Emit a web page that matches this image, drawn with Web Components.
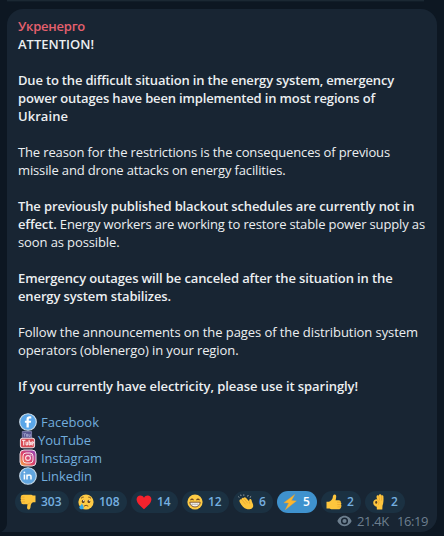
<!DOCTYPE html>
<html lang="en">
<head>
<meta charset="utf-8">
<title>Channel message</title>
<style>
html,body{margin:0;background:#0d1722;height:100%;overflow:hidden}
body{font:13px/18px "Open Sans","Noto Sans",sans-serif;color:#eceff1}
</style>
</head>
<body>
<chat-view></chat-view>
<script>
const define=(name,html,after)=>customElements.define(name,class extends HTMLElement{
  connectedCallback(){
    if(this.shadowRoot)return;
    this.attachShadow({mode:'open'}).innerHTML=typeof html==='function'?html(this):html;
    if(after)after(this);
  }
});

const hand='#fec63d',shade='#e39a2b';
const ICONS={
  down:`<path d="M.8 3.200C.8 1.500 2 .8 3.500.8h7.200c1 0 1.500.6 2.300.6h2.500v6.800h-2.300c-1.600.6-2.500 2.200-2.600 4 0 1.900-.6 3.300-1.900 3.300-1.600 0-1.900-1.700-1.500-3.300l.4-2H3.200C1.600 10.200.9 9 1.400 7.900.5 7.200.4 6 1 5.400.5 4.700.4 3.900.8 3.200z" fill="${hand}"/><path d="M1 5.400h3.600M1.400 7.900h3.500M1 3.100h3.500" stroke="${shade}" stroke-width=".6"/><path d="M7.600 10.200c1.200-.2 2-.8 2.400-1.600" fill="none" stroke="${shade}" stroke-width=".6"/>`,
  up:`<path d="M15.200 12.800c0 1.700-1.200 2.400-2.700 2.400H5.300c-1 0-1.500-.6-2.300-.6H.5V7.800h2.300c1.600-.6 3.700-2.200 3.900-4C6.800 1.900 7.300.5 8.600.5c1.600 0 1.900 1.700 1.500 3.300l-.5 2.400h3.200c1.600 0 2.300 1 1.800 2.100.9.7 1 1.800.4 2.400.5.600.6 1.400.2 2.100z" fill="${hand}"/><path d="M15 10.600h-3.700M14.600 8.200H11M15 12.900h-3.500" stroke="${shade}" stroke-width=".6"/>`,
  cry:`<circle cx="8" cy="8" r="7.600" fill="#fecb45"/><path d="M3 4.300q1.300-1.200 2.700-1.200M10.300 3.100q1.400 0 2.700 1.200M5.900 12.200q2.200-1.900 4.400 0" fill="none" stroke="#68401c" stroke-width=".9"/><ellipse cx="5.200" cy="7.400" rx="1.400" ry="1.700" fill="#59381d"/><ellipse cx="10.900" cy="7.400" rx="1.400" ry="1.700" fill="#59381d"/><circle cx="5.600" cy="6.700" r=".6" fill="#fff"/><circle cx="11.300" cy="6.700" r=".6" fill="#fff"/><path d="M4 9.200c.3 1.800 2 3 1.800 4.500-.3 2.200-4.400 2-4.500-.2C1.300 11.900 3.600 10.900 4 9.200z" fill="#37a8e8"/>`,
  heart:`<path d="M8 15.200C4.300 11.900.6 8.900.6 5.200.6.800 6.300.1 8 3.700 9.700.1 15.400.8 15.400 5.200c0 3.700-3.700 6.700-7.400 10z" fill="#f5222d"/>`,
  grin:`<circle cx="8" cy="8" r="7.600" fill="#fecb45"/><path d="M3.500 6.200q1.500-2.200 3 0M9.500 6.200q1.500-2.200 3 0" fill="none" stroke="#68401c" stroke-width="1.100"/><path d="M2.800 8.200h10.400c0 6.300-10.400 6.300-10.400 0z" fill="#fff" stroke="#70451f" stroke-width=".9"/><path d="M3.400 10.300h9.200" stroke="#8f8578" stroke-width=".6"/><path d="M5.700 8.600v3.600M8 8.600v4M10.300 8.600v3.600" stroke="#b7b1a8" stroke-width=".4"/>`,
  clap:`<path d="M1.500 6.200C1.900 5 3 4.900 3.700 5.500 3.300 4 4.700 3.200 5.700 4.100c.3-1.100 1.500-1.200 2.200-.3l3.200 3.500.1-1.400c.3-1.400 2-1.200 2.300.2.300 2.200 2.100 4.400 1.700 6.300-.6 2.300-3.500 3.300-6.500 2.700C6 14.500 3.700 11.700 1.800 8.200c-.3-.7-.5-1.400-.3-2z" fill="${hand}"/><path d="M3.700 5.700l4 4.700M5.800 4.400l4 4.900M11.200 7.500l.6 2.300" fill="none" stroke="${shade}" stroke-width=".6"/><path d="M1.100 3.500L.4 2.500M3 1.900L2.700.7M9.600 2.500l.6-1.400M11.800 3.500l1.300-1.100M5.800 1.700V.5" stroke="#b7bdc0" stroke-width=".9"/>`,
  bolt:`<path d="M12.800.4L1.800 8.800l4.800.3-3.300 6.700L14.400 6.900l-4.900-.4z" fill="#fdb62d" stroke="#e5a13b" stroke-width=".4"/>`,
  ok:`<path d="M7.200 5.300C6.600 3.900 6.200 2.300 7 1.500c.6-.5 1.300-.3 1.700.3C8.800.7 9.600.1 10.400.3c.7.100 1.100.7 1.200 1.400.6-.7 1.700-.4 1.800.6.200 2.900.3 6.800-.9 9.400l-.2 3.900H6.900l-.2-2.800C4.600 12.100 3.200 10.700 3.200 8.700c0-2.200 2-3.800 4-3.400z" fill="${hand}"/><ellipse cx="6.200" cy="8.400" rx="1" ry="1.400" fill="#563e22"/><path d="M7.300 5.400l1.800 2.800-.8 2.600M8.800 1.900l.9 4.700M11.600 1.900v4.700" fill="none" stroke="${shade}" stroke-width=".6"/>`
};

define('emoji-icon',el=>`<style>:host{display:block;width:16px;height:16px;margin-top:-1px}svg{display:block}</style><svg width="16" height="16" viewBox="0 0 16 16">${ICONS[el.getAttribute('name')]}</svg>`);

define('reaction-pill',el=>`<style>
:host{display:flex;box-sizing:border-box;align-items:center;height:22px;padding-left:5px;border-radius:11px;background:#1b3142;color:#75b0e0;font-size:12px;font-weight:600;gap:5px}
:host([active]){background:#3f92ce;color:#fff}
</style><emoji-icon name="${el.getAttribute('icon')}"></emoji-icon><span><slot></slot></span>`);

/* One line of message copy, tracked to a given measure. */
define('text-line',`<style>:host{display:block;height:18px;white-space:pre}:host([strong]) span{font-weight:600}:host([author]) span{font-weight:600;color:#e5606e}::slotted(b){font-weight:600}</style><span><slot></slot></span>`,el=>{
  const want=+el.getAttribute('measure');if(!want)return;
  const s=el.shadowRoot.querySelector('span');
  const w=s.getBoundingClientRect().width;
  s.style.letterSpacing=((want-w)/el.textContent.length)+'px';
});

const BRANDS={
  facebook:`<circle cx="9" cy="9" r="8.300" fill="#5aa6e8" stroke="#cfe0ec" stroke-width="1.100"/><path d="M9.800 14.500V9.700h2l.4-2H9.800V6.500c0-.8.400-1.100 1.200-1.100h1.300V3.500c-3-.6-4.800.3-4.800 2.700v1.500H5.900v2h1.600v4.800z" fill="#fff"/>`,
  youtube:`<path d="M3.500 0h9.800v7.500H3.500z" fill="#57568f" stroke="#8c8db8" stroke-width=".8"/><path d="M5 1.500l1 1.800v2.200M6 3.300l1-1.800M8 2.800h1v2.400H8zM10.400 2.800v2.400h1.500V2.800" fill="none" stroke="#b1b5d8" stroke-width=".8"/><rect x="1.500" y="7.200" width="15" height="9.900" rx="2.300" fill="#d84b54" stroke="#ead5da" stroke-width="1.100"/><path d="M3.200 9.300h3.600M5 9.300v5.500M7.500 10.800v3.400h1.700v-3.400M10.700 8.800v5.400h1.300v-3h-1.300M15.200 12.500h-1.700V11h1.700zM13.500 12.500v1.700h1.700" fill="none" stroke="#fff" stroke-width="1"/>`,
  instagram:`<defs><linearGradient id="g" x1="0" y1="1" x2="1" y2="0"><stop stop-color="#f9b444"/><stop offset=".45" stop-color="#df4466"/><stop offset="1" stop-color="#8c45c0"/></linearGradient></defs><rect x="1" y="1" width="16" height="16" rx="4" fill="url(#g)" stroke="#e8dbe5" stroke-width="1"/><rect x="4" y="4" width="10" height="10" rx="3" fill="none" stroke="#fbe6ea" stroke-width="1"/><circle cx="9" cy="9" r="2.400" fill="none" stroke="#fbe6ea" stroke-width="1.100"/><circle cx="11.900" cy="6.100" r=".7" fill="#fff"/>`,
  linkedin:`<circle cx="9" cy="9" r="8.300" fill="#61a5df" stroke="#c9deee" stroke-width="1.100"/><path d="M5.400 7.400v5M8 12.400v-5M8 9.500c.3-2 4-2.300 4 .2v2.700" fill="none" stroke="#fff" stroke-width="1.500"/><circle cx="5.400" cy="5.400" r=".9" fill="#fff"/>`
};
define('social-link',el=>`<style>:host{display:flex;height:18px;align-items:center;color:#72addd}svg{display:block;flex:none;overflow:visible;margin-left:.5px}</style><svg width="${el.getAttribute('icon')==='youtube'?17:18}" height="18" viewBox="0 0 18 18">${BRANDS[el.getAttribute('icon')]}</svg><text-line measure="${el.getAttribute('measure')}" style="margin-left:${el.getAttribute('icon')==='youtube'?2.5:4.5}px">${el.getAttribute('label')}</text-line>`);

define('message-meta',`<style>:host{display:flex;justify-content:flex-end;align-items:center;height:18px;margin-top:-1px;padding-right:9px;color:#6d7f8f}svg{margin-right:5px}text-line+text-line{margin-left:8px}</style>
<svg width="15" height="12" viewBox="0 0 16 12"><path fill-rule="evenodd" d="M8 .5C4.400.5 1.600 3.100.4 6c1.200 2.900 4 5.500 7.600 5.500s6.400-2.600 7.600-5.500C14.400 3.100 11.600.5 8 .5zM8 9.800a3.800 3.800 0 110-7.600 3.800 3.800 0 010 7.600z" fill="#6d7f8f"/><circle cx="8" cy="6" r="2.200" fill="#6d7f8f"/></svg>
<text-line measure="32">21.4K</text-line><text-line measure="31">16:19</text-line>`);

define('message-bubble',`<style>
:host{display:flex;flex-direction:column;box-sizing:border-box;position:relative;width:430px;height:523px;margin:7px 0 0 7px;padding:8px 0 0;background:#182533;border-radius:16px 16px 16px 0}
svg.tail{position:absolute;left:-6px;bottom:0}
.copy{padding-left:11px}.reactions{display:flex;gap:4px;padding:6px 0 0 8px}
</style><svg class="tail" width="6" height="10" viewBox="0 0 6 10"><path d="M6 0C6 5 4 8 0 10h6z" fill="#182533"/></svg>
<div class="copy"><slot></slot></div><div class="reactions"><slot name="reactions"></slot></div><slot name="meta"></slot>`);

define('chat-view',`<style>
:host{display:block;width:444px;height:536px;background:#0d1722}
.prev{height:2px;margin:0 20px 0 7px;background:linear-gradient(#1b2833 50%,#111d28 50%)}
reaction-pill{flex:none}
</style><div class="prev"></div><message-bubble>
<text-line author measure="67">Укренерго</text-line>
<text-line strong measure="76">ATTENTION!</text-line>
<text-line></text-line>
<text-line strong measure="376">Due to the difficult situation in the energy system, emergency</text-line>
<text-line strong measure="357">power outages have been implemented in most regions of</text-line>
<text-line strong measure="50">Ukraine</text-line>
<text-line></text-line>
<text-line measure="372">The reason for the restrictions is the consequences of previous</text-line>
<text-line measure="267.500">missile and drone attacks on energy facilities.</text-line>
<text-line></text-line>
<text-line strong measure="396.500">The previously published blackout schedules are currently not in</text-line>
<text-line measure="407"><b>effect.</b> Energy workers are working to restore stable power supply as</text-line>
<text-line measure="101.500">soon as possible.</text-line>
<text-line></text-line>
<text-line strong measure="374.500">Emergency outages will be canceled after the situation in the</text-line>
<text-line strong measure="153">energy system stabilizes.</text-line>
<text-line></text-line>
<text-line measure="400">Follow the announcements on the pages of the distribution system</text-line>
<text-line measure="220.500">operators (oblenergo) in your region.</text-line>
<text-line></text-line>
<text-line strong measure="340">If you currently have electricity, please use it sparingly!</text-line>
<text-line></text-line>
<social-link icon="facebook" label="Facebook" measure="58"></social-link>
<social-link icon="youtube" label="YouTube" measure="53"></social-link>
<social-link icon="instagram" label="Instagram" measure="61"></social-link>
<social-link icon="linkedin" label="Linkedin" measure="51"></social-link>
<reaction-pill slot="reactions" icon="down" style="width:54px">303</reaction-pill>
<reaction-pill slot="reactions" icon="cry" style="width:54px">108</reaction-pill>
<reaction-pill slot="reactions" icon="heart" style="width:47px">14</reaction-pill>
<reaction-pill slot="reactions" icon="grin" style="width:47px">12</reaction-pill>
<reaction-pill slot="reactions" icon="clap" style="width:40px">6</reaction-pill>
<reaction-pill slot="reactions" icon="bolt" active style="width:40px">5</reaction-pill>
<reaction-pill slot="reactions" icon="up" style="width:40px">2</reaction-pill>
<reaction-pill slot="reactions" icon="ok" style="width:40px">2</reaction-pill>
<message-meta slot="meta"></message-meta>
</message-bubble>`);
</script>
</body>
</html>
